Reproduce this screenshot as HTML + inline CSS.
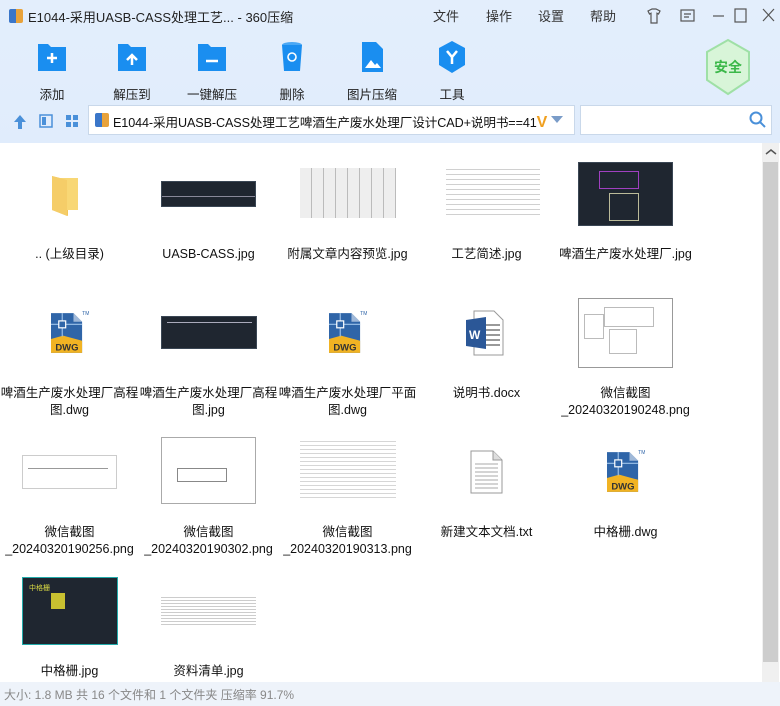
<!DOCTYPE html>
<html><head><meta charset="utf-8">
<style>
*{margin:0;padding:0;box-sizing:border-box}
body{width:780px;height:706px;overflow:hidden;font-family:"Liberation Sans","Noto Sans CJK SC",sans-serif;background:linear-gradient(#e3eefc,#d6e6fa);position:relative;color:#222}
.a{position:absolute}
.menu{font-size:13px;color:#333;top:6px}
.tb{top:40px;width:60px;text-align:center;font-size:12.5px;color:#222}
.tb .ic{width:32px;height:34px;margin:0 auto 10px;position:relative}
.lbl{position:absolute;width:139px;text-align:center;font-size:12.5px;line-height:17px;color:#111}
.dark{background:#1f2630;border:1px solid #3a4654}
.dwg{position:absolute;width:38px;height:48px}
</style></head><body>
<div class="a" style="left:9px;top:9px;width:14px;height:14px;background:linear-gradient(90deg,#3a76c9 50%,#e8a23a 50%);border-radius:2px"></div>
<div class="a" style="left:28px;top:7px;font-size:13px;color:#222">E1044-采用UASB-CASS处理工艺... - 360压缩</div>
<div class="a menu" style="left:433px">文件</div>
<div class="a menu" style="left:486px">操作</div>
<div class="a menu" style="left:538px">设置</div>
<div class="a menu" style="left:590px">帮助</div>
<svg class="a" style="left:645px;top:6px" width="130" height="20" fill="none" stroke="#555" stroke-width="1.2">
<path d="M3 5l4-2h4l4 2-1.5 3-1.5-.8V17H6V7.2L4.5 8z"/>
<rect x="36" y="4" width="13" height="11"/><path d="M39 8h7M39 11h5"/>
<path d="M68 10h11"/><rect x="90" y="3" width="11" height="13"/><path d="M118 3l11 12M129 3l-11 12"/>
</svg>
<div class="a tb" style="left:22px"><div class="ic"><svg width="32" height="34"><path d="M2 4h10l3 3h15v24H2z" fill="#1a8ef0"/><path d="M16 13v10M11 18h10" stroke="#fff" stroke-width="2.5"/></svg></div>添加</div>
<div class="a tb" style="left:102px"><div class="ic"><svg width="32" height="34"><path d="M2 4h10l3 3h15v24H2z" fill="#1a8ef0"/><path d="M16 25v-9M11 20l5-5 5 5" stroke="#fff" stroke-width="2.5" fill="none"/></svg></div>解压到</div>
<div class="a tb" style="left:182px;width:60px"><div class="ic"><svg width="32" height="34"><path d="M2 4h10l3 3h15v24H2z" fill="#1a8ef0"/><path d="M10 21h12" stroke="#fff" stroke-width="2.5"/></svg></div>一键解压</div>
<div class="a tb" style="left:262px"><div class="ic"><svg width="32" height="34"><ellipse cx="16" cy="5" rx="10" ry="3" fill="#4aa8f5"/><path d="M6 5h20l-2 26H8z" fill="#1a8ef0"/><circle cx="16" cy="17" r="4" stroke="#fff" stroke-width="1.6" fill="none"/></svg></div>删除</div>
<div class="a tb" style="left:342px"><div class="ic"><svg width="32" height="34"><path d="M6 2h14l7 7v23H6z" fill="#1a8ef0"/><path d="M9 28l6-8 4 5 2-2 4 5z" fill="#fff"/></svg></div>图片压缩</div>
<div class="a tb" style="left:422px"><div class="ic"><svg width="32" height="34"><path d="M16 1l13 7v17l-13 8-13-8V8z" fill="#1a8ef0"/><path d="M11 11l5 6 5-6M16 17v7" stroke="#fff" stroke-width="2.5" fill="none"/></svg></div>工具</div>
<svg class="a" style="left:703px;top:38px" width="50" height="58"><path d="M25 2l21 12v28l-21 14L4 42V14z" fill="#d8f5d8" stroke="#9fe0a6" stroke-width="2"/><text x="25" y="34" font-size="14" font-weight="bold" fill="#3cb84a" text-anchor="middle" font-family="Noto Sans CJK SC">安全</text></svg>
<svg class="a" style="left:10px;top:112px" width="75" height="18"><path d="M10 3l6 7h-4v7H8v-7H4z" fill="#4a90d9"/><rect x="30" y="3" width="12" height="12" fill="none" stroke="#4a90d9" stroke-width="1.5"/><rect x="32" y="5" width="4" height="8" fill="#4a90d9"/><g fill="#4a90d9"><rect x="56" y="3" width="5" height="5"/><rect x="63" y="3" width="5" height="5"/><rect x="56" y="10" width="5" height="5"/><rect x="63" y="10" width="5" height="5"/></g></svg>
<div class="a" style="left:88px;top:105px;width:487px;height:30px;background:#fff;border:1px solid #c9d8ea"></div>
<div class="a" style="left:95px;top:113px;width:14px;height:14px;background:linear-gradient(90deg,#3a76c9 50%,#e8a23a 50%);border-radius:2px"></div>
<div class="a" style="left:113px;top:112px;font-size:12.6px;color:#111;white-space:nowrap;letter-spacing:-0.1px">E1044-采用UASB-CASS处理工艺啤酒生产废水处理厂设计CAD+说明书==41<b style="color:#f0a020;font-size:16px">V</b></div>
<svg class="a" style="left:551px;top:116px" width="14" height="8"><path d="M0 0h12L6 7z" fill="#7a9cc8"/></svg>
<div class="a" style="left:580px;top:105px;width:192px;height:30px;background:#fff;border:1px solid #c9d8ea"></div>
<svg class="a" style="left:749px;top:111px" width="18" height="18" fill="none" stroke="#4a90d9" stroke-width="2"><circle cx="7" cy="7" r="5.5"/><path d="M11 11l5 5"/></svg>
<div class="a" style="left:0;top:143px;width:780px;height:539px;background:#fff"></div>
<div class="a" style="left:762px;top:143px;width:17px;height:539px;background:#f0f0f0"></div>
<div class="a" style="left:763px;top:162px;width:15px;height:500px;background:#cdcdcd"></div>
<svg class="a" style="left:765px;top:148px" width="12" height="8"><path d="M1 6l5-4 5 4" stroke="#555" stroke-width="1.5" fill="none"/></svg>

<svg class="a" style="left:50px;top:172px" width="34" height="46"><path d="M2 4l16 4v36L2 38z" fill="#f3c65a"/><path d="M8 6h20v32H8z" fill="#f8d775"/><path d="M2 4l15 4v36L2 38z" fill="#f5cd68"/></svg>
<div class="a dark" style="left:161px;top:181px;width:95px;height:26px"><div class="a" style="left:0;top:14px;width:93px;height:1px;background:#889"></div></div>
<div class="a" style="left:300px;top:168px;width:96px;height:50px;background:repeating-linear-gradient(90deg,#eee 0 11px,#bbb 11px 12px),#eee"></div>
<div class="a" style="left:446px;top:165px;width:94px;height:50px;background:repeating-linear-gradient(#fff 0 4px,#aaa 4px 5px);opacity:.55"></div>
<div class="a dark" style="left:578px;top:162px;width:95px;height:64px"><div class="a" style="left:20px;top:8px;width:40px;height:18px;border:1px solid #a040c0"></div><div class="a" style="left:30px;top:30px;width:30px;height:28px;border:1px solid #bb9"></div></div>
<div class="lbl" style="left:0;top:246px">.. (上级目录)</div>
<div class="lbl" style="left:139px;top:246px">UASB-CASS.jpg</div>
<div class="lbl" style="left:278px;top:246px">附属文章内容预览.jpg</div>
<div class="lbl" style="left:417px;top:246px">工艺简述.jpg</div>
<div class="lbl" style="left:556px;top:246px">啤酒生产废水处理厂.jpg</div>

<svg width="0" height="0" style="position:absolute"><defs><g id="d"><path d="M0 0h26l10 10v36H0z" fill="#2f65a8"/><path d="M26 0v10h10z" fill="#9fb8d8"/><path d="M0 30l14-4 22 6v14H0z" fill="#f1b323"/><path d="M0 13h36M13 0v27" stroke="#9fc3ea" stroke-width="1.3"/><rect x="9" y="9" width="8" height="8" fill="#2f65a8" stroke="#fff" stroke-width="1.4"/><text x="5" y="43" font-size="11" font-weight="bold" fill="#333" font-family="Liberation Sans">DWG</text></g></defs></svg>
<svg class="dwg" style="left:51px;top:309px" viewBox="0 -2 44 50" width="44" height="50"><use href="#d"/><text x="36" y="2" font-size="6" fill="#2f65a8">TM</text></svg>
<div class="a dark" style="left:161px;top:316px;width:96px;height:33px"><div class="a" style="left:5px;top:5px;width:85px;height:1px;background:#aab"></div></div>
<svg class="dwg" style="left:329px;top:309px" viewBox="0 -2 44 50" width="44" height="50"><use href="#d"/><text x="36" y="2" font-size="6" fill="#2f65a8">TM</text></svg>
<svg class="a" style="left:464px;top:310px" width="42" height="46"><path d="M10 1h20l9 9v35H10z" fill="#fff" stroke="#999"/><path d="M22 15h14M22 20h14M22 25h14M22 30h14M22 35h14" stroke="#999" stroke-width="2"/><path d="M2 10l20-3v32l-20-3z" fill="#2b5797"/><text x="5" y="29" font-size="12" font-weight="bold" fill="#fff">W</text></svg>
<div class="a" style="left:578px;top:298px;width:95px;height:70px;border:1px solid #999;background:#fff"><div class="a" style="left:25px;top:8px;width:50px;height:20px;border:1px solid #bbb"></div><div class="a" style="left:5px;top:15px;width:20px;height:25px;border:1px solid #bbb"></div><div class="a" style="left:30px;top:30px;width:28px;height:25px;border:1px solid #bbb"></div></div>
<div class="lbl" style="left:0;top:385px">啤酒生产废水处理厂高程<br>图.dwg</div>
<div class="lbl" style="left:139px;top:385px">啤酒生产废水处理厂高程<br>图.jpg</div>
<div class="lbl" style="left:278px;top:385px">啤酒生产废水处理厂平面<br>图.dwg</div>
<div class="lbl" style="left:417px;top:385px">说明书.docx</div>
<div class="lbl" style="left:556px;top:385px">微信截图<br>_20240320190248.png</div>

<div class="a" style="left:22px;top:455px;width:95px;height:34px;border:1px solid #ccc;background:#fff"><div class="a" style="left:5px;top:12px;width:80px;height:1px;background:#999"></div></div>
<div class="a" style="left:161px;top:437px;width:95px;height:67px;border:1px solid #aaa;background:#fff"><div class="a" style="left:15px;top:30px;width:50px;height:14px;border:1px solid #888"></div></div>
<div class="a" style="left:300px;top:438px;width:96px;height:62px;background:repeating-linear-gradient(#fff 0 3px,#bbb 3px 4px);opacity:.6"></div>
<svg class="a" style="left:470px;top:450px" width="34" height="44"><path d="M1 1h22l9 9v33H1z" fill="#fff" stroke="#999"/><path d="M23 1v9h9" fill="#ddd" stroke="#999"/><path d="M5 14h23M5 18h23M5 22h23M5 26h23M5 30h23M5 34h23M5 38h23" stroke="#aaa"/></svg>
<svg class="dwg" style="left:607px;top:448px" viewBox="0 -2 44 50" width="44" height="50"><use href="#d"/><text x="36" y="2" font-size="6" fill="#2f65a8">TM</text></svg>
<div class="lbl" style="left:0;top:524px">微信截图<br>_20240320190256.png</div>
<div class="lbl" style="left:139px;top:524px">微信截图<br>_20240320190302.png</div>
<div class="lbl" style="left:278px;top:524px">微信截图<br>_20240320190313.png</div>
<div class="lbl" style="left:417px;top:524px">新建文本文档.txt</div>
<div class="lbl" style="left:556px;top:524px">中格栅.dwg</div>

<div class="a dark" style="left:22px;top:577px;width:96px;height:68px;border-color:#2aa"><div class="a" style="left:28px;top:15px;width:14px;height:16px;background:#c8c030"></div><div class="a" style="left:6px;top:5px;font-size:7px;color:#dd4">中格栅</div></div>
<div class="a" style="left:161px;top:595px;width:95px;height:32px;background:repeating-linear-gradient(#fff 0 2px,#ccc 2px 3px)"></div>
<div class="lbl" style="left:0;top:663px">中格栅.jpg</div>
<div class="lbl" style="left:139px;top:663px">资料清单.jpg</div>

<div class="a" style="left:0;top:682px;width:780px;height:24px;background:#eef3fa"></div>
<div class="a" style="left:4px;top:686px;font-size:12px;color:#888">大小: 1.8 MB 共 16 个文件和 1 个文件夹 压缩率 91.7%</div>
</body></html>
